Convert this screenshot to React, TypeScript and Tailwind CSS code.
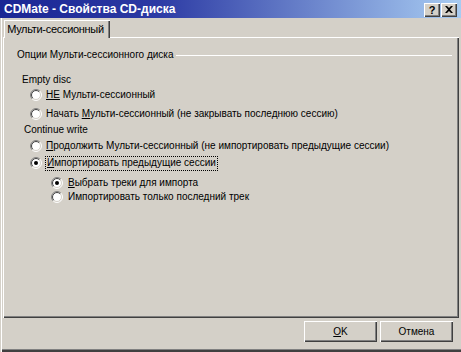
import React from "react";

function Radio({ checked }: { checked?: boolean }) {
  const a = (r: number) => 6 - r * 0.7071;
  const b = (r: number) => 6 + r * 0.7071;
  return (
    <svg width="12" height="12" viewBox="0 0 12 12" className="shrink-0">
      <circle cx="6" cy="6" r="5" fill="#ffffff" />
      <path d={`M${a(5.5)} ${b(5.5)} A5.5 5.5 0 0 1 ${b(5.5)} ${a(5.5)}`} stroke="#808080" strokeWidth="1" fill="none" />
      <path d={`M${b(5.5)} ${a(5.5)} A5.5 5.5 0 0 1 ${a(5.5)} ${b(5.5)}`} stroke="#ffffff" strokeWidth="1" fill="none" />
      <path d={`M${a(4.5)} ${b(4.5)} A4.5 4.5 0 0 1 ${b(4.5)} ${a(4.5)}`} stroke="#404040" strokeWidth="1" fill="none" />
      <path d={`M${b(4.5)} ${a(4.5)} A4.5 4.5 0 0 1 ${a(4.5)} ${b(4.5)}`} stroke="#d4d0c8" strokeWidth="1" fill="none" />
      {checked && <circle cx="6" cy="6" r="2" fill="#000000" />}
    </svg>
  );
}

function Row({ className, children }: { className: string; children: React.ReactNode }) {
  return <div className={`h-[14px] flex items-center ${className}`}>{children}</div>;
}

export default function App() {
  return (
    <div
      className="w-[461px] h-[352px] bg-[#d4d0c8] flex flex-col text-black text-[10px] leading-none shadow-[inset_1px_0_0_#d4d0c8,inset_2px_0_0_#ffffff,inset_0_-2px_0_#404040,inset_0_-3px_0_#808080]"
      style={{ fontFamily: '"Liberation Sans", Arial, sans-serif' }}
    >
      {/* Title bar */}
      <div className="h-[18px] shrink-0 flex items-center justify-between pl-[4px] pr-[4px] bg-[linear-gradient(90deg,#1a2694_0%,#2c3aa4_34%,#a8ccf2_100%)]">
        <span className="text-white font-bold text-[12px]">CDMate - Свойства CD-диска</span>
        <div className="flex gap-[1px] mt-[1px]">
          <div className="w-[16px] h-[14px] bg-[#d4d0c8] flex items-center justify-center shadow-[inset_1px_1px_0_#ffffff,inset_-1px_-1px_0_#404040,inset_-2px_-2px_0_#808080]">
            <span className="font-bold text-[11px] leading-none mt-[1px]">?</span>
          </div>
          <div className="w-[16px] h-[14px] bg-[#d4d0c8] flex items-center justify-center shadow-[inset_1px_1px_0_#ffffff,inset_-1px_-1px_0_#404040,inset_-2px_-2px_0_#808080]">
            <svg width="8" height="7" viewBox="0 0 8 7">
              <path d="M0 0h2l2 2 2-2h2L5 3.5 8 7H6L4 5 2 7H0l3-3.5z" fill="#000" />
            </svg>
          </div>
        </div>
      </div>

      {/* Tabs */}
      <div className="pl-[4px] pt-[2px] flex shrink-0">
        <div className="relative z-10 -mb-[1px] h-[18px] w-[106px] bg-[#d4d0c8] flex items-center justify-center pr-[3px] text-[11px] shadow-[inset_1px_1px_0_#ffffff,inset_-1px_0_0_#404040,inset_-2px_0_0_#808080]">
          <span className="tracking-[-0.3px]">Мульти-сессионный</span>
        </div>
      </div>

      {/* Panel */}
      <div className="ml-[3px] w-[456px] h-[281px] shrink-0 flex flex-col pl-[1px] pt-[1px] shadow-[inset_1px_1px_0_#ffffff,inset_-1px_-1px_0_#404040,inset_-2px_-2px_0_#808080]">
        <div className="flex flex-col pt-[10px]">
          <Row className="pl-[13px] pr-[7px] gap-[2px]">
            <span className="whitespace-nowrap">Опции Мульти-сессионного диска</span>
            <div className="flex-1 h-[1px] bg-white mt-[1px]" />
          </Row>
          <Row className="pl-[18px] mt-[11px]">
            <span>Empty disc</span>
          </Row>
          <Row className="pl-[26px] mt-[1px] gap-[4px]">
            <Radio />
            <span><span className="underline">НЕ</span> Мульти-сессионный</span>
          </Row>
          <Row className="pl-[26px] mt-[5px] gap-[4px]">
            <Radio />
            <span>Начать <span className="underline">М</span>ульти-сессионный (не закрывать последнюю сессию)</span>
          </Row>
          <Row className="pl-[20px] mt-[2px]">
            <span>Continue write</span>
          </Row>
          <Row className="pl-[26px] mt-[2px] gap-[4px]">
            <Radio />
            <span><span className="underline">П</span>родолжить Мульти-сессионный (не импортировать предыдущие сессии)</span>
          </Row>
          <Row className="pl-[26px] mt-[3px] gap-[3px]">
            <Radio checked />
            <span className="border border-dotted border-black px-[1px] h-[15px] flex items-center">
              <span><span className="underline">И</span>мпортировать предыдущие сессии</span>
            </span>
          </Row>
          <Row className="pl-[47px] mt-[6px] gap-[5px]">
            <Radio checked />
            <span><span className="underline">В</span>ыбрать треки для импорта</span>
          </Row>
          <Row className="pl-[47px] mt-[0px] gap-[5px]">
            <Radio />
            <span>Импортировать только последний трек</span>
          </Row>
        </div>
      </div>

      {/* Buttons */}
      <div className="flex justify-end gap-[3px] pr-[8px] mt-[3px]">
        <div className="w-[73px] h-[21px] flex items-center justify-center shadow-[inset_1px_1px_0_#ffffff,inset_-1px_-1px_0_#404040,inset_-2px_-2px_0_#808080]">
          <span><span className="underline">O</span>K</span>
        </div>
        <div className="w-[73px] h-[21px] flex items-center justify-center shadow-[inset_1px_1px_0_#ffffff,inset_-1px_-1px_0_#404040,inset_-2px_-2px_0_#808080]">
          <span>Отмена</span>
        </div>
      </div>
    </div>
  );
}
